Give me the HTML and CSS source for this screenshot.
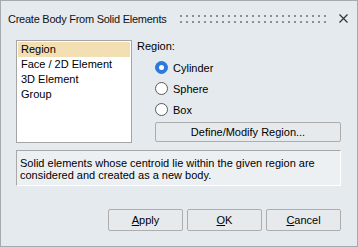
FILE: index.html
```html
<!DOCTYPE html>
<html lang="en">
  <head>
    <title>Create Body From Solid Elements</title>
    <meta charset="utf-8" />
    <link rel="stylesheet" href="styles.css">
  </head>
  <body>
    <div class="dialog">
      <div class="titlebar">
        <span class="title">Create Body From Solid Elements</span>
        <svg class="grip" width="150" height="8">
          <defs>
            <pattern id="dots" width="6" height="6" patternUnits="userSpaceOnUse">
              <rect width="2" height="2" fill="#8e8e8e" />
            </pattern>
          </defs>
          <rect width="150" height="8" fill="url(#dots)" />
        </svg>
        <svg class="close" width="9" height="9" viewBox="0 0 9 9">
          <path d="M0.5 0.5 L8.5 8.5 M8.5 0.5 L0.5 8.5" stroke="#333" stroke-width="1.2" />
        </svg>
      </div>

      <div class="content">
        <div class="top-row">
          <ul class="list">
            <li class="selected">Region</li>
            <li>Face / 2D Element</li>
            <li>3D Element</li>
            <li>Group</li>
          </ul>

          <div class="region-panel">
            <div class="panel-label">Region:</div>
            <div class="radio-row">
              <span class="radio checked"></span>
              <span>Cylinder</span>
            </div>
            <div class="radio-row">
              <span class="radio"></span>
              <span>Sphere</span>
            </div>
            <div class="radio-row">
              <span class="radio"></span>
              <span>Box</span>
            </div>
            <button class="btn define-btn">Define/Modify Region...</button>
          </div>
        </div>

        <div class="info">
          Solid elements whose centroid lie within the given region are considered and created as a new body.
        </div>

        <div class="actions">
          <button class="btn"><u>A</u>pply</button>
          <button class="btn"><u>O</u>K</button>
          <button class="btn"><u>C</u>ancel</button>
        </div>
      </div>
    </div>
  </body>
</html>
```

FILE: styles.css
```css
body {
  margin: 0;
  font-family: 'Liberation Sans', Arial, sans-serif;
  font-size: 11px;
  color: #000;
}

.dialog {
  width: 358px;
  height: 247px;
  box-sizing: border-box;
  border: 1px solid #a3abb0;
  background-color: #e4eaee;
}

.titlebar {
  height: 35px;
  display: flex;
  align-items: center;
  padding: 0 9px 0 7px;
}

.title {
  font-size: 11px;
  letter-spacing: -0.25px;
  color: #111;
  white-space: nowrap;
}

.grip {
  flex-shrink: 0;
  margin-left: auto;
  margin-right: 9px;
  margin-top: 1px;
}

.close {
  display: block;
  flex-shrink: 0;
}

.content {
  padding: 4px 16px 0 15px;
}

.top-row {
  display: flex;
  gap: 5px;
}

.list {
  list-style: none;
  margin: 0;
  width: 116px;
  height: 103px;
  box-sizing: border-box;
  padding: 1px;
  border: 1px solid #a5a5a5;
  background-color: #fff;
}

.list li {
  height: 15px;
  line-height: 15px;
  padding-left: 3px;
}

.list li.selected {
  background-color: #f2dfb3;
}

.region-panel {
  flex: 1;
  display: flex;
  flex-direction: column;
}

.panel-label {
  line-height: 13px;
  margin-bottom: 4px;
}

.radio-row {
  height: 21px;
  display: flex;
  align-items: center;
  gap: 5px;
  padding-left: 18px;
}

.radio {
  width: 13px;
  height: 13px;
  box-sizing: border-box;
  border-radius: 50%;
  border: 1px solid #5a5a5a;
  background-color: #fff;
  display: flex;
  align-items: center;
  justify-content: center;
}

.radio.checked {
  border-color: #2f78dc;
  background-color: #2f78dc;
}

.radio.checked::after {
  content: '';
  width: 5px;
  height: 5px;
  border-radius: 50%;
  background-color: #fff;
}

.btn {
  font-family: inherit;
  font-size: 11px;
  color: #000;
  background-color: #e6eaed;
  border: 1px solid #adadad;
  border-radius: 2px;
  padding: 0;
}

.define-btn {
  margin: 2px 0 0 18px;
  height: 20px;
}

.info {
  margin-top: 7px;
  height: 36px;
  box-sizing: border-box;
  padding: 6px 3px 0;
  line-height: 12px;
  border: 1px solid #fff;
  border-top-color: #a8a8a8;
  border-left-color: #a8a8a8;
  background-color: #ecf0f3;
}

.actions {
  margin-top: 23px;
  display: flex;
  justify-content: flex-end;
  gap: 4px;
}

.actions .btn {
  width: 75px;
  height: 22px;
}
```
